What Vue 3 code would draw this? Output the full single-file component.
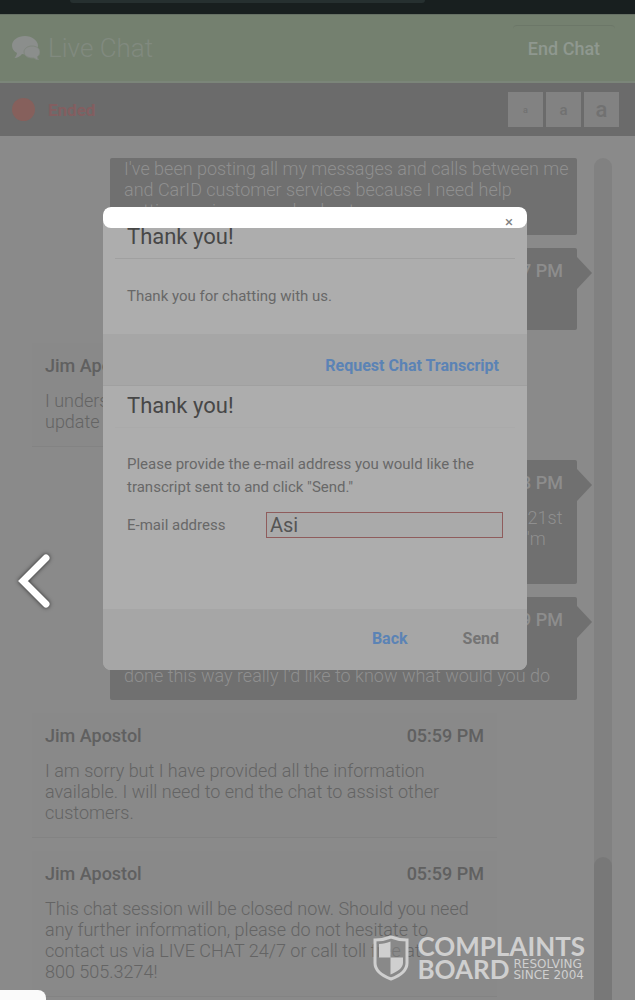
<script setup>
import { ref } from "vue";

const email = ref("Asi");

// Tamaños de letra disponibles para la conversación
const sizes = ["small", "medium", "large"];

const messages = [
  {
    own: true,
    continued: true,
    lines: [
      "I've been posting all my messages and calls between me",
      "and CarID customer services because I need help",
      "getting my issue resolved not more",
    ],
  },
  { own: true, time: "05:57 PM", lines: ["Thank you"] },
  {
    name: "Jim Apostol",
    time: "05:58 PM",
    lines: ["I understand. I have provided you the", "update on this order"],
  },
  {
    own: true,
    time: "05:58 PM",
    lines: [
      "I have been waiting for my orders ever since March 21st",
      "and nobody is ready to give me a real answer, now I'm",
      "asking you again",
    ],
  },
  {
    own: true,
    time: "05:59 PM",
    lines: ["So if you were me and it was", "done this way really I'd like to know what would you do"],
  },
  {
    name: "Jim Apostol",
    time: "05:59 PM",
    lines: [
      "I am sorry but I have provided all the information",
      "available. I will need to end the chat to assist other",
      "customers.",
    ],
  },
  {
    name: "Jim Apostol",
    time: "05:59 PM",
    lines: [
      "This chat session will be closed now. Should you need",
      "any further information, please do not hesitate to",
      "contact us via LIVE CHAT 24/7 or call toll free at",
      "800 505.3274!",
    ],
  },
];
</script>

<template>
  <div class="page">
    <div class="browser-strip"><span class="address-pill"></span></div>

    <header class="chat-header">
      <svg class="chat-icon" viewBox="0 0 28 24" aria-hidden="true">
        <path d="M13 0C6 0 0 4 0 9.500c0 3.500 2 6 5 7.500-.3 2-1.500 4-2.500 5 3 0 6-2 7.500-4 1 .2 2 .2 3 .2C20 18 26 14 26 9.500S20 0 13 0z" />
        <path class="bubble-front" d="M20 10c-4.500 0-8 2.600-8 6s3.500 6 8 6l2 0c1 1 3 2 5 2-1-1-1.500-2-1.500-3.500 1.500-1 2.500-2.500 2.500-4.500 0-3.400-3.500-6-8-6z" />
      </svg>
      <h1>Live Chat</h1>
      <button class="end-chat" type="button">End Chat</button>
    </header>

    <div class="status-bar">
      <span class="status-dot"></span>
      <span class="status-text">Ended</span>
      <div class="sizes">
        <button v-for="size in sizes" :key="size" type="button" :class="['size', size]">a</button>
      </div>
    </div>

    <main class="chat">
      <div class="messages">
        <article
          v-for="(message, i) in messages"
          :key="i"
          :class="['message', { own: message.own, continued: message.continued }]"
        >
          <div v-if="!message.continued" class="message-head">
            <span>{{ message.name }}</span>
            <span>{{ message.time }}</span>
          </div>
          <p>
            <template v-for="line in message.lines" :key="line">{{ line }}<br /></template>
          </p>
        </article>
      </div>
      <div class="scrollbar"><div class="thumb"></div></div>
    </main>

    <div class="overlay">
      <section class="modal" role="dialog" aria-label="Thank you!">
        <div class="modal-top">
          <button class="close" type="button" aria-label="Close">×</button>
        </div>
        <h2>Thank you!</h2>
        <div class="modal-body thanks">
          <p>Thank you for chatting with us.</p>
        </div>
        <div class="modal-actions request">
          <button class="primary" type="button">Request Chat Transcript</button>
        </div>
        <h2 class="second">Thank you!</h2>
        <form id="transcript" class="modal-body transcript" @submit.prevent>
          <p>Please provide the e-mail address you would like the transcript sent to and click "Send."</p>
          <div class="field">
            <label for="email">E-mail address</label>
            <input id="email" v-model="email" type="text" />
          </div>
        </form>
        <div class="modal-actions last">
          <button class="primary" type="button">Back</button>
          <button type="submit" form="transcript">Send</button>
        </div>
      </section>
    </div>

    <button class="previous" type="button" aria-label="Previous">
      <svg viewBox="0 0 40 60">
        <path d="M32 8 L9 31 L32 54" />
      </svg>
    </button>

    <div class="corner"></div>

    <div class="brand">
      <svg class="shield" viewBox="0 0 36 46" aria-hidden="true">
        <path class="outline" d="M18 2C13 4 8 5 2 5v23c0 8 8 13 16 16 8-3 16-8 16-16V5C28 5 23 4 18 2z" />
        <path class="fill" d="M17.500 6.500v16H6V9c4 0 8-1 11.500-2.500zM17.500 22.500H30V28c0 5-6 9-12.500 11.500z" />
      </svg>
      <div class="brand-text">
        <span class="brand-name">COMPLAINTS</span>
        <div class="brand-row">
          <span class="brand-name">BOARD</span>
          <span class="brand-note">RESOLVING<br />SINCE 2004</span>
        </div>
      </div>
    </div>
  </div>
</template>

<style>
body {
  margin: 0;
  background: #8a8a8a;
}
</style>

<style scoped>
.page {
  position: relative;
  display: flex;
  flex-direction: column;
  height: 100vh;
  overflow: hidden;
  background: #8a8a8a;
  font-family: Roboto, "Liberation Sans", sans-serif;
}

h1,
h2,
p {
  margin: 0;
  font-weight: 400;
}

button {
  padding: 0;
  border: 0;
  background: none;
  font-family: inherit;
  cursor: pointer;
}

/* ===== Cabecera ===== */
.browser-strip {
  flex: none;
  height: 14px;
  background: #181f1f;
}
.address-pill {
  display: block;
  width: 56%;
  height: 3px;
  margin-left: 11%;
  border-radius: 0 0 8px 8px;
  background: #263030;
}

.chat-header {
  flex: none;
  display: flex;
  align-items: center;
  box-sizing: border-box;
  height: 69px;
  padding: 0 20px 0 12px;
  border-top: 1px solid #667064;
  border-bottom: 2px solid #7b8579;
  background: #74806f;
}
.chat-icon {
  width: 28px;
  height: 24px;
  fill: #8b8e8c;
}
.bubble-front {
  stroke: #7f867d;
  stroke-width: 1;
}
h1 {
  margin-left: 8px;
  color: #818a7f;
  font-size: 26px;
  font-weight: 300;
}
.end-chat {
  width: 102px;
  height: 46px;
  margin-left: auto;
  border-top: 1px solid #6c7768;
  border-radius: 4px;
  color: #8f988f;
  font-size: 18px;
  font-weight: 500;
}

.status-bar {
  flex: none;
  display: flex;
  align-items: center;
  height: 53px;
  padding: 0 16px 0 12px;
  background: #6b6b6b;
}
.status-dot {
  width: 23px;
  height: 23px;
  border-radius: 50%;
  background: #86605c;
}
.status-text {
  margin-left: 13px;
  color: #835e60;
  font-size: 17px;
  font-weight: 700;
}
.sizes {
  display: flex;
  gap: 3px;
  margin-left: auto;
}
.size {
  width: 35px;
  height: 35px;
  background: #828282;
  color: #717171;
  font-weight: 500;
}
.size.small {
  font-size: 9px;
}
.size.medium {
  font-size: 15px;
}
.size.large {
  font-size: 22px;
}

/* ===== Conversación ===== */
.chat {
  flex: 1;
  display: flex;
  min-height: 0;
  padding: 22px 23px 0 32px;
}
.messages {
  flex: 1;
  display: flex;
  flex-direction: column;
  gap: 13px;
  min-width: 0;
  padding-right: 17px;
}
.message {
  margin-right: 80px;
  padding: 12px 13px 14px;
  border-bottom: 1px solid #838383;
  background: #898989;
  color: #646464;
}
.message.own {
  position: relative;
  margin: 0 0 0 78px;
  padding: 12px 14px 14px;
  border: 0;
  border-radius: 2px;
  background: #707070;
  color: #8f8f8f;
}
.message.own.continued {
  padding-top: 0;
}
.message.own:not(.continued)::after {
  content: "";
  position: absolute;
  top: 9px;
  left: 100%;
  border: 16px solid transparent;
  border-right: 0;
  border-left: 15px solid #707070;
}
.message-head {
  display: flex;
  justify-content: space-between;
  margin-bottom: 13px;
  color: #606060;
  font-size: 18px;
  font-weight: 500;
  line-height: 22px;
}
.own .message-head {
  color: #8d8d8d;
}
.message p {
  font-size: 18px;
  font-weight: 300;
  line-height: 21px;
  white-space: nowrap;
}

.scrollbar {
  display: flex;
  flex: none;
  align-items: flex-end;
  width: 18px;
  border-radius: 9px 9px 0 0;
  background: #818181;
}
.thumb {
  width: 18px;
  height: 17%;
  border-radius: 9px 9px 0 0;
  background: #787878;
}

/* ===== Ventana modal ===== */
.overlay {
  position: absolute;
  inset: 0;
  padding: 207px 108px 0 103px;
}
.modal {
  overflow: hidden;
  border-radius: 8px;
  background: #adadad;
  color: #686868;
}
.modal-top {
  display: flex;
  justify-content: flex-end;
  height: 21px;
  padding-right: 14px;
  border-radius: 8px;
  background: #ffffff;
}
.close {
  height: 29px;
  color: #808080;
  font-size: 15px;
}
h2 {
  margin: 0 12px;
  padding: 0 12px 12px;
  border-bottom: 1px solid #a0a0a0;
  color: #474747;
  font-size: 22px;
  line-height: 18px;
}
h2.second {
  padding-top: 11px;
  border-bottom-color: #aaaaaa;
}
.modal-body {
  padding: 0 24px;
  font-size: 15px;
  line-height: 23px;
}
.thanks {
  padding-top: 26px;
  padding-bottom: 26px;
}
.transcript {
  padding-top: 25px;
  padding-bottom: 71px;
}
.field {
  display: flex;
  align-items: center;
  margin-top: 13px;
}
.field label {
  flex: 0 0 139px;
}
.field input {
  flex: 1;
  min-width: 0;
  box-sizing: border-box;
  height: 26px;
  padding: 0 3px;
  border: 1px solid #8f5c5c;
  border-radius: 0;
  outline: 0;
  background: #aaaaaa;
  color: #555555;
  font-family: inherit;
  font-size: 20px;
}
.modal-actions {
  display: flex;
  justify-content: flex-end;
  gap: 55px;
  box-sizing: border-box;
  height: 61px;
  padding: 0 28px 2px;
  background: #a6a6a6;
}
.modal-actions.request {
  height: 52px;
  padding-top: 14px;
  border-bottom: 1px solid #a0a0a0;
}
.modal-actions button {
  color: #747474;
  font-size: 16px;
  font-weight: 700;
}
.modal-actions .primary {
  color: #5b83b5;
}

/* ===== Visor: flecha, esquina y marca ===== */
.previous {
  position: absolute;
  top: 550px;
  left: 14px;
  width: 40px;
  height: 60px;
}
.previous svg {
  display: block;
  overflow: visible;
  filter: drop-shadow(0 0 2px rgba(0, 0, 0, 0.7));
}
.previous path {
  fill: none;
  stroke: #ffffff;
  stroke-width: 7;
  stroke-linecap: round;
}
.corner {
  position: absolute;
  bottom: 0;
  left: 0;
  width: 46px;
  height: 10px;
  border-radius: 0 8px 0 0;
  background: #fafafa;
}
.brand {
  position: absolute;
  right: 50px;
  bottom: 19px;
  display: flex;
  align-items: center;
  gap: 8px;
  color: #cfcfcf;
}
.shield {
  width: 36px;
  height: 46px;
}
.shield .outline {
  fill: rgba(138, 138, 138, 0.5);
  stroke: #cfcfcf;
  stroke-width: 3;
}
.shield .fill {
  fill: #cfcfcf;
}
.brand-text {
  display: flex;
  flex-direction: column;
}
.brand-name {
  font-family: Lato, sans-serif;
  font-size: 26px;
  font-weight: 700;
  line-height: 23px;
}
.brand-row {
  display: flex;
  align-items: center;
  gap: 4px;
}
.brand-note {
  font-family: "DejaVu Sans", sans-serif;
  font-size: 12px;
  line-height: 11px;
}
</style>
